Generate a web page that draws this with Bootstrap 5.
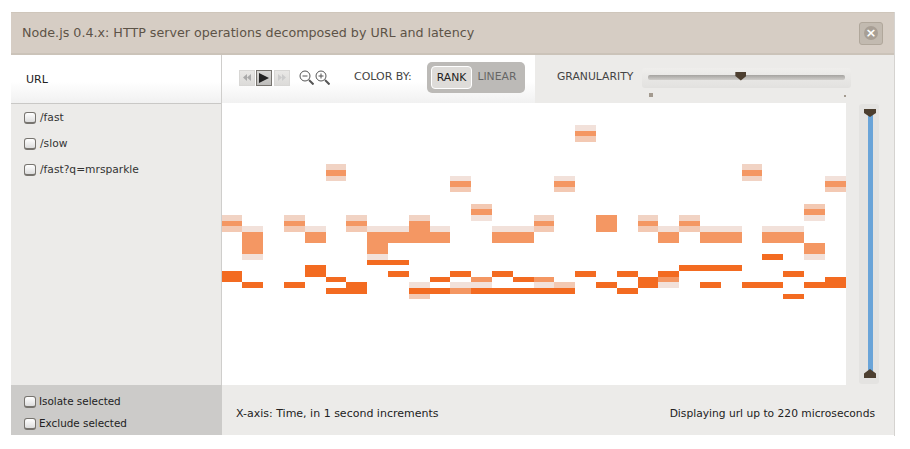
<!DOCTYPE html>
<html lang="en">
<head>
    <meta charset="UTF-8">
    <title>Node.js 0.4.x: HTTP server operations decomposed by URL and latency</title>
    <link href="https://cdn.jsdelivr.net/npm/bootstrap@5.3.3/dist/css/bootstrap.min.css" rel="stylesheet">
    <style>
        body { background: #fff; font-family: "DejaVu Sans", sans-serif; font-size: 11px; color: #222; }
        .dash { width: 884px; height: 424px; margin: 12px 0 0 11px; border-right: 1px solid #d5d3d0; }
        .dash-title { height: 43px; background: #d6cdc4; border-top: 1px solid #cfc6bb; border-bottom: 2px solid #cbc3b9; padding: 0 11px; color: #5d5347; font-size: 12.7px; }
        .close-btn { width: 24px; height: 23px; background: #c2bab0; border: 1px solid #b0a79b; border-radius: 3px; padding: 0; }
        .close-btn span { width: 14px; height: 14px; border-radius: 50%; background: #a89f95; color: #fff; font-size: 13px; line-height: 13px; font-weight: 700; }
        .dash-main { height: 330px; }
        .side { width: 211px; background: #ecebe9; border-right: 1px solid #cfcecc; }
        .side-head { height: 49px; background: linear-gradient(#fff 55%, #f1f1f1); border-bottom: 1px solid #c9c8c6; padding: 2px 0 0 15px; color: #222; }
        .side-list { padding: 1px 0 0 13px; font-size: 10.7px; }
        .side-list label { height: 26px; color: #333; }
        .fake-check { width: 12px; height: 12px; border: 1px solid #77746f; border-bottom-width: 2px; border-radius: 3px; background: linear-gradient(#fff, #ddd); margin-right: 4px; flex: none; }
        .right-col { width: 672px; }
        .toolbar { height: 48px; }
        .toolbar-left { width: 313px; background: linear-gradient(#fff 55%, #f1f1f1); padding: 0 0 3px 17px; }
        .toolbar-right { background: #ecebe9; flex: 1; padding: 0 0 3px 22px; }
        .play-btn { width: 16px; height: 16px; background: linear-gradient(#e9e8e6, #dcdbd9); border: 1px solid #d8d7d5; margin-right: 2px; }
        .play-btn.first-btn { margin-right: 1px; }
        .play-btn.on { background: linear-gradient(#d8d7d5, #bdbcba); border-color: #77746f; }
        .zoom-icons { margin-left: 7px; margin-right: 24px; gap: 1px; }
        .color-label { color: #444; margin-right: 15px; }
        .gran-label { color: #444; font-size: 10.8px; }
        .color-switch { background: #bcbab7; border-radius: 5px; padding: 4px; height: 31px; font-size: 10.8px; }
        .color-switch span { padding: 0 5px; height: 23px; color: #666; line-height: 22px; }
        .color-switch .sel { background: #dedcd9; border: 1px solid #fff; border-radius: 4px; color: #222; }
        .slider-box { width: 209px; height: 20px; background: linear-gradient(#efeeec, #e2e1df); border-radius: 3px; margin-left: 9px; padding: 0 6px; position: relative; }
        .slider-line { height: 5px; border-radius: 2px; background: linear-gradient(#a5a3a0, #cfcdca); }
        .slider-grip { position: absolute; left: 93px; top: 4px; width: 11px; height: 9px; background: #4d3f30; clip-path: polygon(0 0, 100% 0, 100% 50%, 50% 100%, 0 50%); }
        .tick-big { position: absolute; left: 7px; top: 25px; width: 4px; height: 4px; background: #a39a8f; }
        .tick-small { position: absolute; right: 5px; top: 27px; width: 2px; height: 2px; background: #a39a8f; }
        .chart-row { height: 282px; }
        .chart-wrap { width: 624px; height: 282px; background: #fff; }
        .chart-side { flex: 1; background: #ecebe9; padding: 1px 0 0 13px; }
        .v-track { width: 20px; height: 280px; background: #e4e3e1; border-radius: 3px; position: relative; }
        .v-bar { position: absolute; left: 9px; top: 6px; bottom: 10px; width: 5px; background: #6aa4d8; }
        .v-grip { position: absolute; left: 5px; width: 12px; background: #4d3f30; }
        .v-grip.top-g { top: 5px; height: 8px; clip-path: polygon(0 0, 100% 0, 100% 50%, 50% 100%, 0 50%); }
        .v-grip.bot-g { bottom: 6px; height: 9px; clip-path: polygon(50% 0, 100% 50%, 100% 100%, 0 100%, 0 50%); }
        .dash-foot { height: 50px; background: #ecebe9; }
        .foot-left { width: 211px; background: #cccbc9; padding: 6px 0 0 13px; font-size: 10.4px; }
        .foot-left label { height: 22px; color: #222; }
        .foot-left .fake-check { margin-right: 3px; }
        .foot-right { flex: 1; padding: 8px 19px 0 14px; color: #222; }
        .foot-note { font-size: 10.7px; }
    </style>
</head>
<body class="m-0">
    <div class="dash d-flex flex-column">
        <div class="dash-title d-flex align-items-center justify-content-between">
            <span>Node.js 0.4.x: HTTP server operations decomposed by URL and latency</span>
            <button class="close-btn d-flex align-items-center justify-content-center" type="button"><span class="d-block text-center">×</span></button>
        </div>
        <div class="dash-main d-flex">
            <div class="side">
                <div class="side-head d-flex align-items-center">URL</div>
                <div class="side-list d-flex flex-column">
                    <label class="d-flex align-items-center"><span class="fake-check"></span>/fast</label>
                    <label class="d-flex align-items-center"><span class="fake-check"></span>/slow</label>
                    <label class="d-flex align-items-center"><span class="fake-check"></span>/fast?q=mrsparkle</label>
                </div>
            </div>
            <div class="right-col d-flex flex-column">
                <div class="toolbar d-flex">
                    <div class="toolbar-left d-flex align-items-center">
                        <span class="play-btn first-btn d-flex align-items-center justify-content-center">
                            <svg width="10" height="7" viewBox="0 0 10 7"><path d="M5 0v7L1 3.5zM9 0v7L5 3.5z" fill="#aaa"/></svg>
                        </span>
                        <span class="play-btn on d-flex align-items-center justify-content-center">
                            <svg width="10" height="10" viewBox="0 0 10 10"><path d="M0 0l10 5L0 10z" fill="#222"/></svg>
                        </span>
                        <span class="play-btn d-flex align-items-center justify-content-center">
                            <svg width="10" height="7" viewBox="0 0 10 7"><path d="M1 0v7l4-3.5zM5 0v7l4-3.5z" fill="#ccc"/></svg>
                        </span>
                        <span class="zoom-icons d-flex">
                            <svg width="15" height="15" viewBox="0 0 15 15" fill="none" stroke="#555"><circle cx="6" cy="6" r="5"/><path d="M3.5 6h5"/><path d="M10 10l4.5 4.5" stroke-width="2"/></svg>
                            <svg width="15" height="15" viewBox="0 0 15 15" fill="none" stroke="#555"><circle cx="6" cy="6" r="5"/><path d="M3.5 6h5M6 3.5v5"/><path d="M10 10l4.5 4.5" stroke-width="2"/></svg>
                        </span>
                        <span class="color-label">COLOR BY:</span>
                        <span class="color-switch d-flex">
                            <span class="sel d-block">RANK</span>
                            <span class="d-block">LINEAR</span>
                        </span>
                    </div>
                    <div class="toolbar-right d-flex align-items-center">
                        <span class="gran-label">GRANULARITY</span>
                        <div class="slider-box d-flex flex-column justify-content-center">
                            <div class="slider-line"></div>
                            <div class="slider-grip"></div>
                            <div class="tick-big"></div>
                            <div class="tick-small"></div>
                        </div>
                    </div>
                </div>
                <div class="chart-row d-flex">
                    <div class="chart-wrap">
                        <svg id="heatmap" width="624" height="282" class="d-block"></svg>
                    </div>
                    <div class="chart-side">
                        <div class="v-track">
                            <div class="v-bar"></div>
                            <div class="v-grip top-g"></div>
                            <div class="v-grip bot-g"></div>
                        </div>
                    </div>
                </div>
            </div>
        </div>
        <div class="dash-foot d-flex">
            <div class="foot-left d-flex flex-column">
                <label class="d-flex align-items-center"><span class="fake-check"></span>Isolate selected</label>
                <label class="d-flex align-items-center"><span class="fake-check"></span>Exclude selected</label>
            </div>
            <div class="foot-right d-flex align-items-center justify-content-between">
                <span>X-axis: Time, in 1 second increments</span>
                <span class="foot-note">Displaying url up to 220 microseconds</span>
            </div>
        </div>
    </div>

    <script src="https://cdn.jsdelivr.net/npm/bootstrap@5.3.3/dist/js/bootstrap.bundle.min.js"></script>
    <script>
        // levels: 0 dark, 1 mid, 2 light, 3 palest, 4 light top of a stack
        var colors = ['#f36b21', '#f49763', '#f3c9b3', '#f2e1da', '#f1d3c4'];
        // one list per second: [top row, bottom row, level], rows counted from the bottom
        var A = [[15,14,4],[14,13,1],[13,12,2]];
        var B = [[13,12,3],[12,10,1]];
        var C = [[22,21,3],[21,20,1],[20,19,2]];
        var cells = [
            A.concat([[5,3,0]]),
            [[13,12,3],[12,8,1],[8,7,3],[3,2,0]],
            [],
            A.concat([[3,2,0]]),
            B.concat([[6,4,0]]),
            [[24,23,4],[23,22,1],[22,21,4],[4,3,0],[2,1,0]],
            A.concat([[3,1,0]]),
            [[13,12,3],[12,8,1],[8,7,3],[7,6,0]],
            B.concat([[7,6,0],[5,4,0]]),
            [[15,14,4],[14,10,1],[3,2,3],[2,1,0],[1,0,2]],
            B.concat([[4,3,0],[2,1,0]]),
            C.concat([[5,4,0],[3,2,3],[2,1,1]]),
            [[17,16,2],[16,15,1],[15,14,3],[4,3,1],[3,2,3],[2,1,0]],
            B.concat([[5,4,0],[2,1,0]]),
            B.concat([[4,3,0],[2,1,0]]),
            A.concat([[4,3,1],[3,2,3],[2,1,0]]),
            C.concat([[3,2,2],[2,1,0]]),
            [[31,30,3],[30,29,1],[29,28,2],[5,4,0]],
            [[15,12,1],[3,2,0]],
            [[5,4,0],[2,1,0]],
            A.concat([[4,2,0]]),
            B.concat([[5,4,0],[4,3,1],[3,2,3]]),
            A.concat([[6,5,0]]),
            B.concat([[6,5,0],[3,2,0]]),
            B.concat([[6,5,0]]),
            [[24,23,4],[23,22,1],[22,21,4],[3,2,0]],
            B.concat([[8,7,0],[3,2,0]]),
            B.concat([[5,4,0],[1,0,0]]),
            [[17,16,2],[16,15,1],[15,14,3],[10,8,1],[8,7,3],[3,2,0]],
            C.concat([[4,2,0]])
        ];

        // pixel top of each row line, inside the svg
        var rowY = {0:196, 1:191, 2:185, 3:179, 4:174, 5:168, 6:162, 7:157, 8:151, 10:140, 12:129, 13:123,
            14:118, 15:112, 16:106, 17:101, 19:89, 20:84, 21:78, 22:73, 23:67, 24:61, 28:39, 29:33, 30:28, 31:22};

        var svg = document.getElementById('heatmap');
        var colX = function (i) { return Math.floor(i * 20.8); };
        cells.forEach(function (list, i) {
            list.forEach(function (c) {
                var r = document.createElementNS('http://www.w3.org/2000/svg', 'rect');
                r.setAttribute('x', colX(i));
                r.setAttribute('y', rowY[c[0]]);
                r.setAttribute('width', colX(i + 1) - colX(i));
                r.setAttribute('height', rowY[c[1]] - rowY[c[0]]);
                r.setAttribute('fill', colors[c[2]]);
                svg.appendChild(r);
            });
        });
    </script>
</body>
</html>
